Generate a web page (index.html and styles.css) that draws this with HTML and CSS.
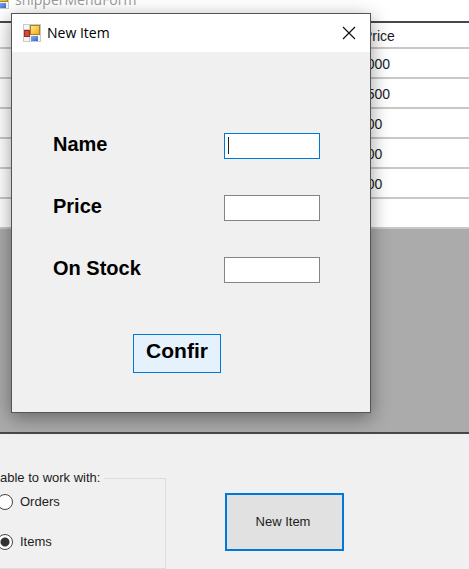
FILE: index.html
```
<!DOCTYPE html>
<html lang="en">
<head>
<meta charset="utf-8">
<title>New Item</title>
<link rel="stylesheet" href="styles.css">
</head>
<body>
<svg class="defs" aria-hidden="true">
  <defs>
    <linearGradient id="gold" x1="0" y1="0" x2="1" y2="1"><stop offset="0" stop-color="#ffe98a"/><stop offset="1" stop-color="#eeae10"/></linearGradient>
    <linearGradient id="blue" x1="0" y1="0" x2="1" y2="1"><stop offset="0" stop-color="#84adf5"/><stop offset="1" stop-color="#3569d2"/></linearGradient>
    <symbol id="form-icon" viewBox="0 0 18 18">
      <rect width="18" height="18" fill="#c9c9c9"/>
      <path d="M1 1h5v4H1zM1 13h5v4H1zM7 11h10v6H7z" fill="#f6f6f6"/>
      <rect x="1" y="6" width="6" height="7" fill="#a52a20"/>
      <rect x="2" y="7" width="4" height="5" fill="#cf4a3c"/>
      <rect x="7" y="1" width="10" height="10" fill="#a9821c"/>
      <rect x="8" y="2" width="8" height="8" fill="url(#gold)"/>
      <rect x="8" y="12" width="7" height="5" fill="url(#blue)"/>
    </symbol>
  </defs>
</svg>
<main class="window">
  <header class="window-title">
    <svg class="form-icon"><use href="#form-icon"/></svg>
    <span>shipperMenuForm</span>
  </header>
  <div class="grid">
    <table>
      <thead><tr><th>Price</th></tr></thead>
      <tbody>
        <tr><td>1000</td></tr>
        <tr><td>1500</td></tr>
        <tr><td>100</td></tr>
        <tr><td>100</td></tr>
        <tr><td>100</td></tr>
        <tr><td></td></tr>
      </tbody>
    </table>
  </div>
  <div class="controls">
    <fieldset>
      <legend>able to work with:</legend>
      <label><input type="radio" name="table">Orders</label>
      <label><input type="radio" name="table" checked>Items</label>
    </fieldset>
    <button class="new-item" type="button">New Item</button>
  </div>
</main>
<section class="dialog" role="dialog" aria-labelledby="dialog-title">
  <header class="dialog-title">
    <svg class="form-icon"><use href="#form-icon"/></svg>
    <span id="dialog-title">New Item</span>
    <button class="close" type="button" aria-label="Close"><svg viewBox="0 0 12 12"><path d="M0 0L12 12M12 0L0 12"/></svg></button>
  </header>
  <form>
    <div class="field"><label for="name">Name</label><span class="box active"><input id="name" type="text"></span></div>
    <div class="field"><label for="price">Price</label><span class="box"><input id="price" type="text"></span></div>
    <div class="field"><label for="stock">On Stock</label><span class="box"><input id="stock" type="text"></span></div>
    <button class="confirm" type="button">Confir</button>
  </form>
</section>
</body>
</html>
```
FILE: styles.css
```
* { box-sizing: border-box; }
body {
  margin: 0;
  height: 100vh;
  overflow: hidden;
  background: #f0f0f0;
  color: #1c1c24;
  font: 14px/20px "Liberation Sans", sans-serif;
}
.defs { position: absolute; width: 0; height: 0; }
.form-icon { width: 18px; height: 18px; flex: none; }
button, input { font: inherit; color: inherit; margin: 0; }

.window {
  display: flex;
  flex-direction: column;
  height: 100vh;
  overflow: hidden;
}
.window-title {
  display: flex;
  align-items: flex-end;
  flex: none;
  gap: 6px;
  height: 21px;
  margin-left: -9px;
  padding-bottom: 12px;
  background: #fff;
  color: #999;
  font: 14px/18px "Open Sans", sans-serif;
}
.grid {
  flex: none;
  height: 413px;
  border-top: 2px solid #48484a;
  border-bottom: 2px solid #48484a;
  background: #ababab;
}
.grid table {
  width: 100%;
  border-collapse: separate;
  border-spacing: 0;
  background: #fff;
}
.grid th, .grid td {
  height: 30px;
  padding: 2px 0 0 359px;
  border-bottom: 2px solid #c8c8c8;
  font-weight: normal;
  text-align: left;
}
.grid th { height: 26px; padding-left: 363px; }
.grid tr:nth-child(n+3) td { padding-left: 359px; }
.controls {
  display: flex;
  align-items: flex-start;
  flex: 1;
  padding-top: 34px;
  font-size: 13px;
}
fieldset {
  flex: none;
  width: 176px;
  min-width: 0;
  height: 101px;
  margin: 0 0 0 -10px;
  padding: 0 0 0 8px;
  border: 1px solid #dcdcdc;
}
legend { padding: 0 4px 0 1px; }
fieldset label {
  display: flex;
  align-items: center;
  gap: 7px;
  height: 20px;
  margin: 4px 0 20px -2px;
}
input[type="radio"] {
  appearance: none;
  width: 16px;
  height: 16px;
  border: 1px solid #444;
  border-radius: 50%;
  background: #fff;
}
input[type="radio"]:checked { background: radial-gradient(circle, #333 4px, #fff 5px); }
.new-item {
  width: 119px;
  height: 58px;
  margin: 25px 0 0 59px;
  padding: 0 3px 0 0;
  border: 2px solid #0078d7;
  background: #e1e1e1;
}

.dialog {
  position: absolute;
  top: 13px;
  left: 11px;
  width: 360px;
  border: 1px solid #555;
  background: #f0f0f0;
  box-shadow: 0 5px 18px rgba(0, 0, 0, .4);
}
.dialog-title {
  display: flex;
  align-items: center;
  gap: 6px;
  height: 38px;
  padding: 0 15px 0 11px;
  background: #fff;
  color: #000;
  font: 14px/20px "Open Sans", sans-serif;
}
.close {
  display: flex;
  margin-left: auto;
  padding: 0;
  border: 0;
  background: none;
}
.close svg { width: 12px; height: 12px; overflow: visible; fill: none; stroke: #111; stroke-width: 1.2; }
form {
  display: flex;
  flex-direction: column;
  padding: 81px 50px 39px 41px;
  color: #000;
  font: bold 20px/22px "Liberation Sans", sans-serif;
}
.field {
  display: flex;
  justify-content: space-between;
  align-items: flex-start;
  height: 62px;
}
.box {
  display: flex;
  width: 96px;
  height: 26px;
  padding: 3px;
  border: 1px solid #848484;
  background: #fff;
}
.box input {
  width: 100%;
  padding: 0;
  border: 0;
  outline: 0;
  background: none;
}
.active { border-color: #0078d7; }
.active::before { content: ""; flex: none; width: 1px; height: 17px; background: #222; }
.confirm {
  width: 88px;
  height: 39px;
  margin: 15px 0 0 80px;
  padding: 0 0 5px;
  border: 1px solid #0078d7;
  background: #e5f1fb;
  font-size: 21px;
}
```
